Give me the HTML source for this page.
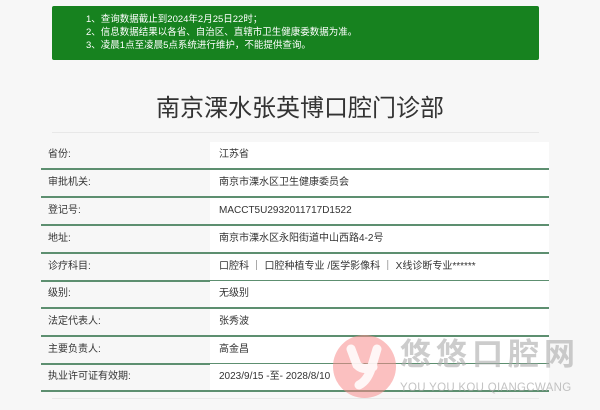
<!DOCTYPE html>
<html><head><meta charset="utf-8"><style>
body{margin:0;width:600px;height:410px;background:#f7f7f7;position:relative;overflow:hidden;font-family:"Liberation Sans","Noto Sans CJK SC",sans-serif;}
.notice{position:absolute;left:52px;top:6px;width:487px;height:54px;background:#17821f;border-radius:2px;color:#fff;font-size:9.5px;line-height:13px;box-sizing:border-box;padding:7px 0 0 34px;}
h1{position:absolute;left:0;width:600px;top:88px;margin:0;text-align:center;font-weight:normal;font-size:24px;color:#333;}
.sep{position:absolute;left:52px;width:487px;height:1px;background:#e8e8e8;}
.row{position:absolute;left:41px;width:508px;height:26px;border-bottom:2px solid #5d8f70;font-size:10px;color:#333;}
.row .l{position:absolute;left:7px;top:0;line-height:26px;}
.row .v{position:absolute;left:169px;top:0;width:339px;height:26px;background:#fff;line-height:26px;padding-left:9px;box-sizing:border-box;}
.logo{position:absolute;left:333px;top:335px;width:63px;height:63px;}
.lt{position:absolute;left:400px;top:337px;font-size:31px;font-weight:bold;color:rgba(170,170,170,.6);letter-spacing:5px;line-height:36px;}
.ls{position:absolute;left:400px;top:382px;font-size:11.5px;color:rgba(170,170,170,.7);letter-spacing:.3px;}
</style></head><body>
<div class="notice">1、查询数据截止到2024年2月25日22时；<br>2、信息数据结果以各省、自治区、直辖市卫生健康委数据为准。<br>3、凌晨1点至凌晨5点系统进行维护，不能提供查询。</div>
<h1>南京溧水张英博口腔门诊部</h1>
<div class="sep" style="top:132px"></div>
<div class="row" style="top:142px"><span class="l">省份:</span><span class="v">江苏省</span></div>
<div class="row" style="top:170px"><span class="l">审批机关:</span><span class="v">南京市溧水区卫生健康委员会</span></div>
<div class="row" style="top:198px"><span class="l">登记号:</span><span class="v">MACCT5U2932011717D1522</span></div>
<div class="row" style="top:226px"><span class="l">地址:</span><span class="v">南京市溧水区永阳街道中山西路4-2号</span></div>
<div class="row" style="top:254px"><span class="l">诊疗科目:</span><span class="v">口腔科 ｜ 口腔种植专业 /医学影像科 ｜ X线诊断专业******</span></div>
<div class="row" style="top:281px"><span class="l">级别:</span><span class="v">无级别</span></div>
<div class="row" style="top:309px"><span class="l">法定代表人:</span><span class="v">张秀波</span></div>
<div class="row" style="top:337px"><span class="l">主要负责人:</span><span class="v">高金昌</span></div>
<div class="row" style="top:364px"><span class="l">执业许可证有效期:</span><span class="v">2023/9/15 -至- 2028/8/10</span></div>
<div class="sep" style="top:398px"></div>
<svg class="logo" viewBox="0 0 63 63"><circle cx="31.5" cy="31.5" r="31.5" fill="rgba(248,140,140,.55)"/><path d="M18 14 L24 30 Q30 36 40 32 M44 14 L38 34 Q34 46 26 50" stroke="rgba(255,255,255,.85)" stroke-width="9" stroke-linecap="round" fill="none"/></svg>
<div class="lt">悠悠口腔网</div>
<div class="ls">YOU YOU KOU QIANGCWANG</div>
</body></html>
